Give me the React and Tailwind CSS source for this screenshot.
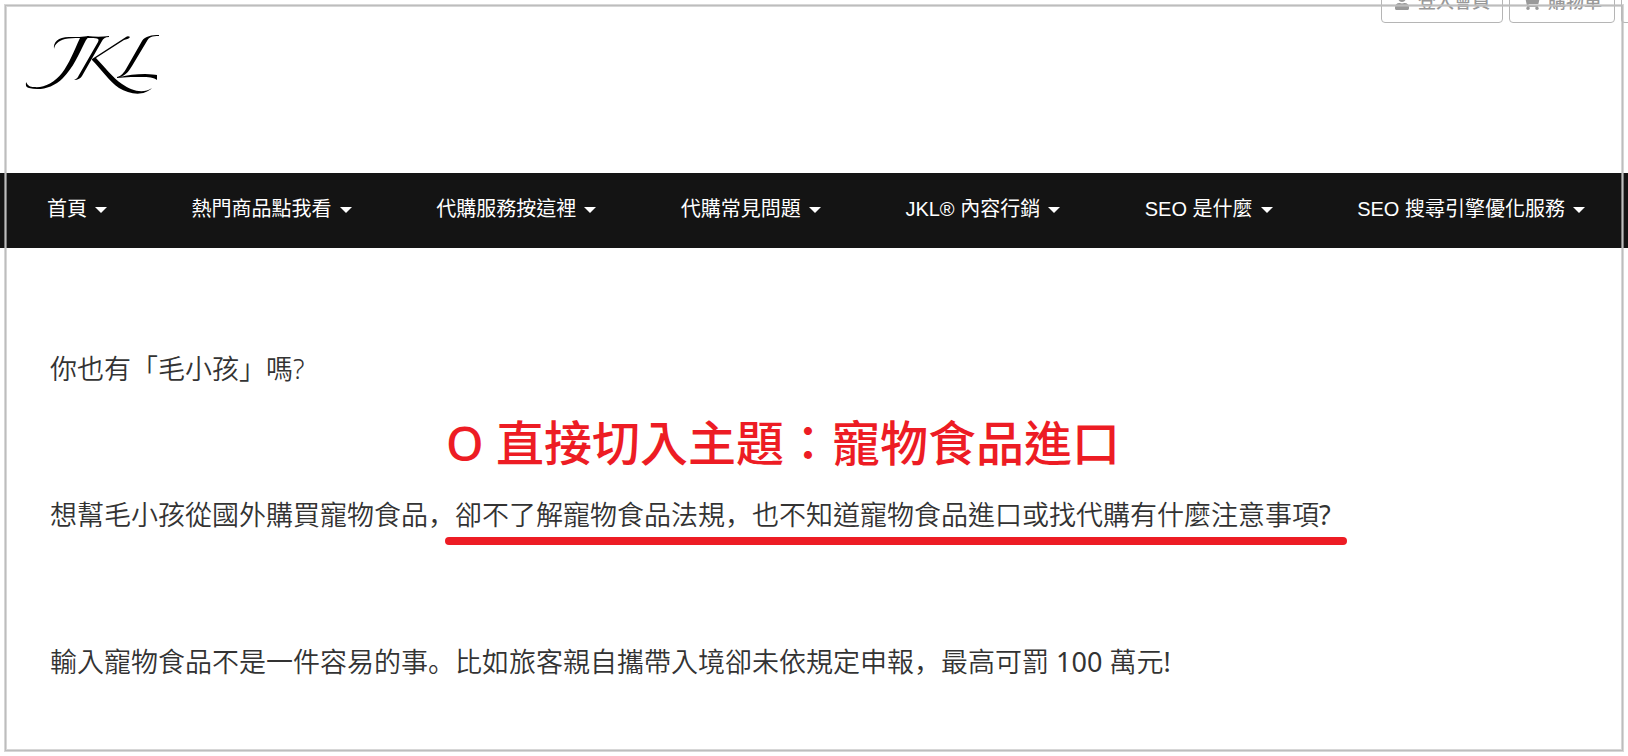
import { FaUser, FaShoppingCart } from "react-icons/fa";

const navItems = [
  "首頁",
  "熱門商品點我看",
  "代購服務按這裡",
  "代購常見問題",
  "JKL® 內容行銷",
  "SEO 是什麼",
  "SEO 搜尋引擎優化服務",
];

function Logo() {
  return (
    <svg width="160" height="80" viewBox="0 0 160 80" role="img" aria-label="JKL" fill="#000">
      {/* J */}
      <path d="M29 23 C28 16 33 11 44 11 C51 11 58 11 64 10 L64 11 C62 12 61 14 60 16 C54 28 48 42 38 52 C28 62 15 65 4 62 C0 61 1 58 1 56 C3 60 5 61 9 61 C19 62 29 57 37 47 C44 38 49 25 55 12 C49 12 44 12 40 13 C33 15 30 18 29 23 Z" />
      {/* K */}
      <path d="M62 10 C70 11 77 11 84 10 L84 11 C80 11 78 13 77 15 L57 50 C56 52 53 54 49 54 C52 53 53 51 54 49 L73 16 C75 12 72 12 62 12 Z" />
      <path d="M67 33 L101 11 C102 10 104 10 105 11 C104 13 101 13 99 14 L71 32 C78 39 88 52 97 58 C107 65 118 68 127 62 C118 71 104 68 94 62 C84 55 76 43 67 34 Z" />
      {/* L */}
      <path d="M134 10 C127 10 124 11 122 15 L107 40 C104 45 101 49 95 51 C102 49 111 48 120 48 C126 48 130 49 132 49 L132 54 C128 50 116 51 106 51 C100 51 96 52 92 52 L92 51 C97 50 99 46 101 43 L117 15 C120 10 127 9 134 9 Z" />
    </svg>
  );
}

function AccountButton({ icon: Icon, size, children }) {
  return (
    <button
      type="button"
      className="flex h-10 items-center gap-2 whitespace-nowrap rounded border border-[#b5b5b5] px-3 pb-0.5 text-lg leading-5 font-medium text-[#999]"
    >
      <Icon size={size} />
      {children}
    </button>
  );
}

// corner-set comma and full stop
function Mark({ children }) {
  return <span className="font-['Noto_Sans_CJK_SC',sans-serif]">{children}</span>;
}

export default function App() {
  return (
    <div className="relative min-h-screen overflow-hidden bg-white font-['Liberation_Sans','Noto_Sans_CJK_TC',sans-serif]">
      <header>
        <div className="flex h-[23px] items-end justify-end gap-1.5 overflow-hidden">
          <AccountButton icon={FaUser} size={16}>登入會員</AccountButton>
          <AccountButton icon={FaShoppingCart} size={18}>購物車</AccountButton>
          <div className="h-10 w-[7px] rounded-bl border-b border-l border-[#b5b5b5]" />
        </div>
        <a href="#home" className="block w-fit pb-[67px] pl-[25px] pt-[3px]">
          <Logo />
        </a>
      </header>

      <nav className="bg-[#141414] pb-[3px] pl-[47px] pr-[43px]">
        <ul className="flex h-[72px] items-center justify-between">
          {navItems.map((item) => (
            <li key={item}>
              <button
                type="button"
                className="flex items-center gap-2 whitespace-nowrap text-xl text-white"
              >
                {item}
                <span className="mt-0.5 border-x-[6px] border-t-[6px] border-x-transparent border-t-white" />
              </button>
            </li>
          ))}
        </ul>
      </nav>

      <main className="px-[50px] pt-[101px] font-['Noto_Sans','Noto_Sans_CJK_TC',sans-serif] text-[27px] font-[350] leading-10 text-[#333]">
        <p>你也有「毛小孩」嗎?</p>

        <p className="pl-[396px] pt-[18px] text-5xl font-medium leading-[72px] text-[#ed1c24]">
          O 直接切入主題：寵物食品進口
        </p>

        <p className="flex pt-[15px]">
          <span>
            想幫毛小孩從國外購買寵物食品<Mark>，</Mark>
          </span>
          <span className="relative">
            卻不了解寵物食品法規<Mark>，</Mark>也不知道寵物食品進口或找代購有什麼注意事項
            <span className="font-normal">?</span>
            <span className="absolute -left-2.5 -right-4 top-[43px] h-2 rounded-full bg-[#ed1c24]" />
          </span>
        </p>

        <p className="pt-[106px]">
          輸入寵物食品不是一件容易的事<Mark>。</Mark>比如旅客親自攜帶入境卻未依規定申報
          <Mark>，</Mark>最高可罰 <span className="font-normal">100</span> 萬元
          <span className="font-normal">!</span>
        </p>
      </main>

      {/* Page frame */}
      <div className="pointer-events-none absolute inset-[5px] border border-[#bdbdbd] ring-1 ring-[#bdbdbd]/60 inset-ring-1 inset-ring-[#bdbdbd]/60" />
    </div>
  );
}
